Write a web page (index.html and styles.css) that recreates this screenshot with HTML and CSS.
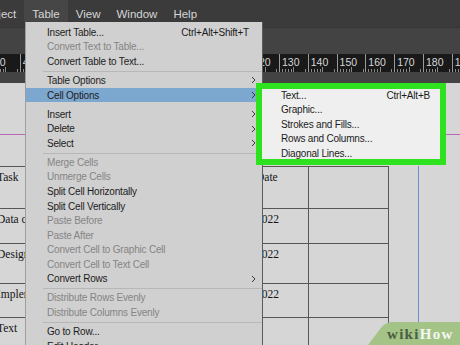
FILE: index.html
```html
<!DOCTYPE html>
<html lang="en">
<head>
  <meta charset="UTF-8">
  <meta name="viewport" content="width=device-width, initial-scale=1.0">
  <title>Table menu - Cell Options</title>
  <link rel="stylesheet" href="styles.css">
</head>
<body>
  <div class="app">
    <!-- barra de menus -->
    <div class="menubar">
      <span class="menubar-item first">Object</span>
      <span class="menubar-item open">Table</span>
      <span class="menubar-item">View</span>
      <span class="menubar-item">Window</span>
      <span class="menubar-item">Help</span>
    </div>
    <div class="control-panel"></div>

    <!-- regla horizontal (las marcas tapadas por el menu van sin numero) -->
    <div class="ruler">
      <span class="ruler-seg">30</span>
      <span class="ruler-seg">40</span>
      <span class="ruler-seg"></span>
      <span class="ruler-seg"></span>
      <span class="ruler-seg"></span>
      <span class="ruler-seg"></span>
      <span class="ruler-seg"></span>
      <span class="ruler-seg"></span>
      <span class="ruler-seg"></span>
      <span class="ruler-seg">120</span>
      <span class="ruler-seg">130</span>
      <span class="ruler-seg">140</span>
      <span class="ruler-seg">150</span>
      <span class="ruler-seg">160</span>
      <span class="ruler-seg">170</span>
      <span class="ruler-seg">180</span>
      <span class="ruler-seg">190</span>
    </div>
    <div class="ruler-gap"></div>

    <!-- documento con la tabla -->
    <div class="pasteboard">
      <div class="guide-h"></div>
      <div class="guide-v"></div>
      <table class="doc-table">
        <colgroup>
          <col class="col-task">
          <col class="col-date">
          <col class="col-notes">
        </colgroup>
        <tr><td>Task</td><td>Date</td><td></td></tr>
        <tr><td>Data collection</td><td>2022</td><td></td></tr>
        <tr><td>Design</td><td>2022</td><td></td></tr>
        <tr><td>Implementation</td><td>2022</td><td></td></tr>
        <tr><td>Text</td><td></td><td></td></tr>
      </table>
    </div>

    <!-- menu Table abierto -->
    <div class="menu">
      <div class="menu-item"><span>Insert Table...</span><span>Ctrl+Alt+Shift+T</span></div>
      <div class="menu-item off"><span>Convert Text to Table...</span></div>
      <div class="menu-item"><span>Convert Table to Text...</span></div>
      <div class="menu-sep"></div>
      <div class="menu-item sub"><span>Table Options</span><svg class="arrow" viewBox="0 0 5 8"><polyline points="1,1 4,4 1,7"/></svg></div>
      <div class="menu-item sub active"><span>Cell Options</span><svg class="arrow" viewBox="0 0 5 8"><polyline points="1,1 4,4 1,7"/></svg></div>
      <div class="menu-gap"></div>
      <div class="menu-item sub"><span>Insert</span><svg class="arrow" viewBox="0 0 5 8"><polyline points="1,1 4,4 1,7"/></svg></div>
      <div class="menu-item sub"><span>Delete</span><svg class="arrow" viewBox="0 0 5 8"><polyline points="1,1 4,4 1,7"/></svg></div>
      <div class="menu-item sub"><span>Select</span><svg class="arrow" viewBox="0 0 5 8"><polyline points="1,1 4,4 1,7"/></svg></div>
      <div class="menu-sep"></div>
      <div class="menu-item off"><span>Merge Cells</span></div>
      <div class="menu-item off"><span>Unmerge Cells</span></div>
      <div class="menu-item"><span>Split Cell Horizontally</span></div>
      <div class="menu-item"><span>Split Cell Vertically</span></div>
      <div class="menu-item off"><span>Paste Before</span></div>
      <div class="menu-item off"><span>Paste After</span></div>
      <div class="menu-item off"><span>Convert Cell to Graphic Cell</span></div>
      <div class="menu-item off"><span>Convert Cell to Text Cell</span></div>
      <div class="menu-item sub"><span>Convert Rows</span><svg class="arrow" viewBox="0 0 5 8"><polyline points="1,1 4,4 1,7"/></svg></div>
      <div class="menu-sep"></div>
      <div class="menu-item off"><span>Distribute Rows Evenly</span></div>
      <div class="menu-item off"><span>Distribute Columns Evenly</span></div>
      <div class="menu-sep"></div>
      <div class="menu-item"><span>Go to Row...</span></div>
      <div class="menu-item"><span>Edit Header...</span></div>
    </div>

    <!-- submenu Cell Options, marcado en verde -->
    <div class="submenu">
      <div class="submenu-list">
        <div class="menu-item"><span>Text...</span><span>Ctrl+Alt+B</span></div>
        <div class="menu-item"><span>Graphic...</span></div>
        <div class="menu-item"><span>Strokes and Fills...</span></div>
        <div class="menu-item"><span>Rows and Columns...</span></div>
        <div class="menu-item"><span>Diagonal Lines...</span></div>
      </div>
    </div>

    <div class="wikihow"><span class="wiki">wiki</span><span class="how">How</span></div>
  </div>
</body>
</html>
```

FILE: styles.css
```css
body {
  margin: 0;
  background-color: #d6d6d6;
  font-family: "Liberation Sans", Arial, sans-serif;
}
.app {
  position: relative;
  width: 460px;
  height: 345px;
  overflow: hidden;
  background-color: #d6d6d6;
}

/* barra de menus */
.menubar {
  height: 27px;
  background-color: #3b3b3b;
  display: flex;
  align-items: flex-start;
}
.menubar-item {
  height: 22px;
  line-height: 29px;
  padding: 0 8px;
  font-size: 11.5px;
  color: #d6d6d6;
  white-space: nowrap;
}
.menubar-item.first {
  margin-left: -25px;
}
.menubar-item.open {
  background-color: #464646;
}
.control-panel {
  height: 26px;
  background-color: #434343;
  border-top: 1px solid #353535;
}

/* regla */
.ruler {
  height: 18px;
  background-color: #191919;
  display: flex;
  margin-left: -9px;
}
.ruler-seg {
  position: relative;
  flex: 0 0 28.8px;
  box-sizing: border-box;
  border-left: 1px solid #9a9a9a;
  padding: 3px 0 0 2px;
  font-size: 10.5px;
  line-height: 10px;
  color: #d8d8d8;
  background-image: repeating-linear-gradient(to right, transparent 0, transparent 2.38px, #8a8a8a 2.38px, #8a8a8a 2.88px);
  background-size: 100% 3px;
  background-position: 0 100%;
  background-repeat: no-repeat;
}
.ruler-seg::after {
  content: "";
  position: absolute;
  left: 13.4px;
  bottom: 0;
  width: 1px;
  height: 5px;
  background-color: #8a8a8a;
}
.ruler-gap {
  height: 11px;
  background-color: #434343;
}

/* documento */
.pasteboard {
  position: relative;
  height: 263px;
  padding-top: 83px;
  box-sizing: border-box;
  background-color: #d6d6d6;
}
.guide-h {
  position: absolute;
  left: 0;
  right: 0;
  top: 51px;
  height: 1px;
  background-color: #b968b9;
}
.guide-v {
  position: absolute;
  top: 83px;
  bottom: 0;
  left: 418px;
  width: 1px;
  background-color: #6d8fd0;
}
.doc-table {
  position: relative;
  margin-left: -8px;
  border-collapse: collapse;
  table-layout: fixed;
  width: 396px;
  font-family: "Liberation Serif", "Times New Roman", serif;
  font-size: 11.5px;
  color: #141414;
}
.col-task { width: 253px; }
.col-date { width: 63px; }
.col-notes { width: 80px; }
.doc-table td {
  border: 1.5px solid #575757;
  vertical-align: top;
  padding: 4px 4px 0 4px;
  white-space: nowrap;
  overflow: hidden;
}
.doc-table td:nth-child(2) { padding-left: 10px; }
.doc-table tr:nth-child(1) td { height: 37px; }
.doc-table tr:nth-child(2) td { height: 30px; }
.doc-table tr:nth-child(3) td { height: 35px; }
.doc-table tr:nth-child(4) td { height: 29px; }
.doc-table tr:nth-child(5) td { height: 36px; }

/* menu desplegable */
.menu {
  position: absolute;
  left: 25px;
  top: 22px;
  width: 238px;
  height: 340px;
  box-sizing: border-box;
  padding-top: 3px;
  background-color: #d0d0d0;
  border-left: 1px solid #9d9d9d;
  border-right: 1px solid #5c5c5c;
  font-size: 10px;
  letter-spacing: -0.2px;
  color: #1c1c1c;
}
.menu-item {
  height: 14.6px;
  display: flex;
  align-items: center;
  justify-content: space-between;
  padding: 0 13px 0 21px;
  white-space: nowrap;
}
.menu-item.off {
  color: #858585;
}
.menu-item.sub {
  padding-right: 6px;
}
.menu-item.active {
  background-color: #7ca7cf;
}
.arrow {
  width: 5px;
  height: 8px;
  fill: none;
  stroke: #3a3a3a;
  stroke-width: 1;
}
.menu-sep {
  height: 4.4px;
  position: relative;
}
.menu-sep::after {
  content: "";
  position: absolute;
  left: 17px;
  right: 0;
  top: 2px;
  height: 1px;
  background-color: #b7b7b7;
}
.menu-gap {
  height: 4.4px;
}

/* submenu */
.submenu {
  position: absolute;
  left: 256px;
  top: 83px;
  width: 190px;
  height: 82px;
  box-sizing: border-box;
  border: 6px solid #2fe21f;
  background-color: #efefef;
  font-size: 10px;
  letter-spacing: -0.2px;
  color: #1c1c1c;
}
.submenu-list {
  margin-top: -1px;
}
.submenu .menu-item {
  height: 14.5px;
  padding: 0 10px 0 19px;
}

/* marca de agua */
.wikihow {
  position: absolute;
  right: 0;
  bottom: 0;
  width: 92px;
  height: 23px;
  box-sizing: border-box;
  padding: 3px 0 0 19px;
  font-family: "Liberation Serif", "Times New Roman", serif;
  font-weight: bold;
  font-size: 15px;
  letter-spacing: 1.3px;
  line-height: 18px;
  white-space: nowrap;
}
.wikihow::before {
  content: "";
  position: absolute;
  left: 0;
  top: 0;
  right: -30px;
  bottom: 0;
  background-color: #a3c486;
  border-top-left-radius: 6px;
  transform: skewX(-37deg);
  transform-origin: bottom left;
}
.wikihow span {
  position: relative;
}
.wiki {
  color: #4e5c43;
}
.how {
  color: #f6f6f4;
}
```
